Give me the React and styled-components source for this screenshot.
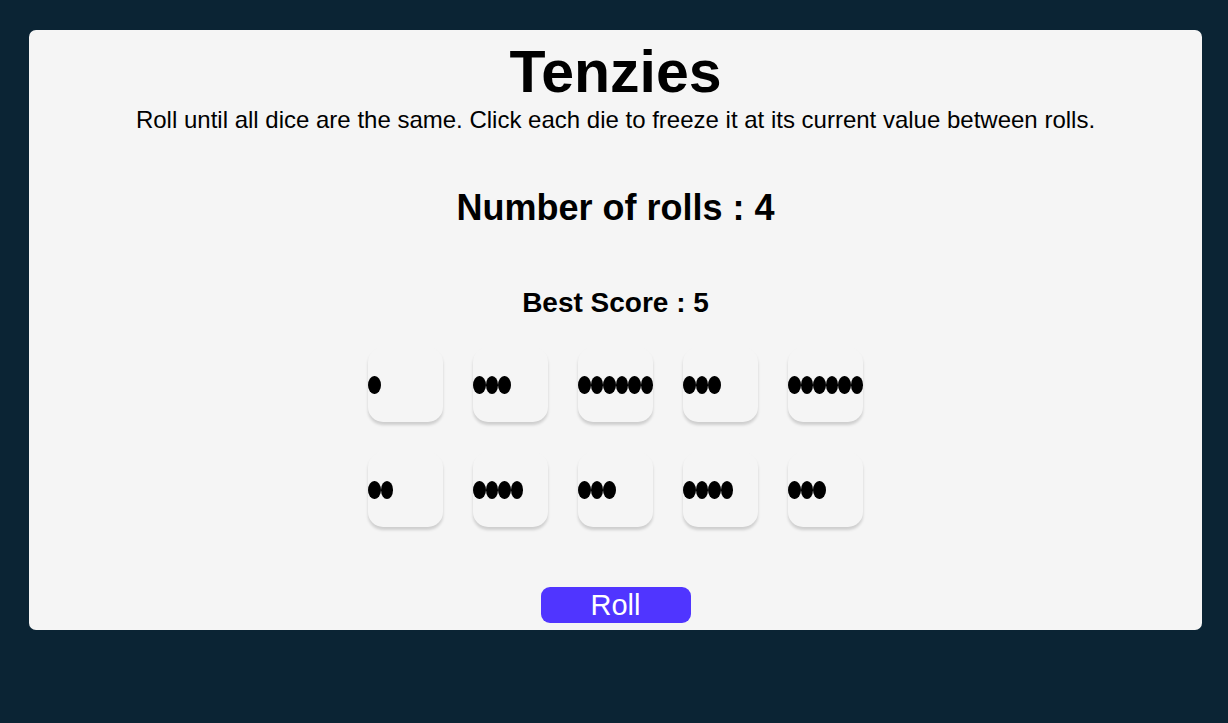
import React, { useState } from "react";
import styled, { createGlobalStyle } from "styled-components";

const GlobalStyle = createGlobalStyle`
  * { box-sizing: border-box; }
  body {
    margin: 0;
    padding: 30px 26px 30px 29px;
    background: #0b2434;
    color: #000;
    font-family: "Liberation Sans", Arial, sans-serif;
  }
`;

const Board = styled.main`
  display: flex;
  flex-direction: column;
  align-items: center;
  padding: 8px 8px 7px;
  border-radius: 7px;
  background: #f5f5f5;
`;

const Title = styled.h1`
  margin: 0;
  font-size: 59px;
  line-height: 68px;
`;

const Instructions = styled.p`
  margin: 0;
  font-size: 24px;
  line-height: 28px;
  text-align: center;
`;

const Rolls = styled.h2`
  margin: 53px 0 0;
  font-size: 36px;
  line-height: 42px;
`;

const Best = styled.h3`
  margin: 58px 0 0;
  font-size: 28px;
  line-height: 32px;
`;

const DiceGrid = styled.div`
  display: grid;
  grid-template-columns: repeat(5, 75px);
  gap: 30px;
  margin-top: 28px;
`;

const Die = styled.button`
  display: grid;
  grid-template-columns: repeat(6, 1fr);
  align-items: center;
  height: 75px;
  padding: 0;
  border: 0;
  border-radius: 15px;
  background: #f5f5f5;
  box-shadow: 0 3px 3px rgba(0, 0, 0, 0.16);
  cursor: pointer;
`;

const Pip = styled.span`
  height: 18px;
  border-radius: 50%;
  background: #000;
`;

const RollButton = styled.button`
  width: 150px;
  height: 36px;
  margin-top: 60px;
  padding: 0;
  border: 0;
  border-radius: 9px;
  background: #5035ff;
  color: #fff;
  font-family: inherit;
  font-size: 29px;
  line-height: 36px;
  cursor: pointer;
`;

const START = [1, 3, 6, 3, 6, 2, 4, 3, 4, 3];
const rollDie = () => Math.ceil(Math.random() * 6);

export default function App() {
  const [dice, setDice] = useState(START);
  const [held, setHeld] = useState([]);
  const [rolls, setRolls] = useState(4);

  const toggle = (i) =>
    setHeld((h) => (h.includes(i) ? h.filter((n) => n !== i) : [...h, i]));

  const roll = () => {
    setDice((d) => d.map((v, i) => (held.includes(i) ? v : rollDie())));
    setRolls((n) => n + 1);
  };

  return (
    <>
      <GlobalStyle />
      <Board>
        <Title>Tenzies</Title>
        <Instructions>
          Roll until all dice are the same. Click each die to freeze it at its
          current value between rolls.
        </Instructions>
        <Rolls>Number of rolls : {rolls}</Rolls>
        <Best>Best Score : 5</Best>
        <DiceGrid>
          {dice.map((value, i) => (
            <Die
              key={i}
              type="button"
              aria-label={`Die showing ${value}`}
              aria-pressed={held.includes(i)}
              onClick={() => toggle(i)}
            >
              {Array.from({ length: value }, (_, n) => (
                <Pip key={n} />
              ))}
            </Die>
          ))}
        </DiceGrid>
        <RollButton type="button" onClick={roll}>Roll</RollButton>
      </Board>
    </>
  );
}
